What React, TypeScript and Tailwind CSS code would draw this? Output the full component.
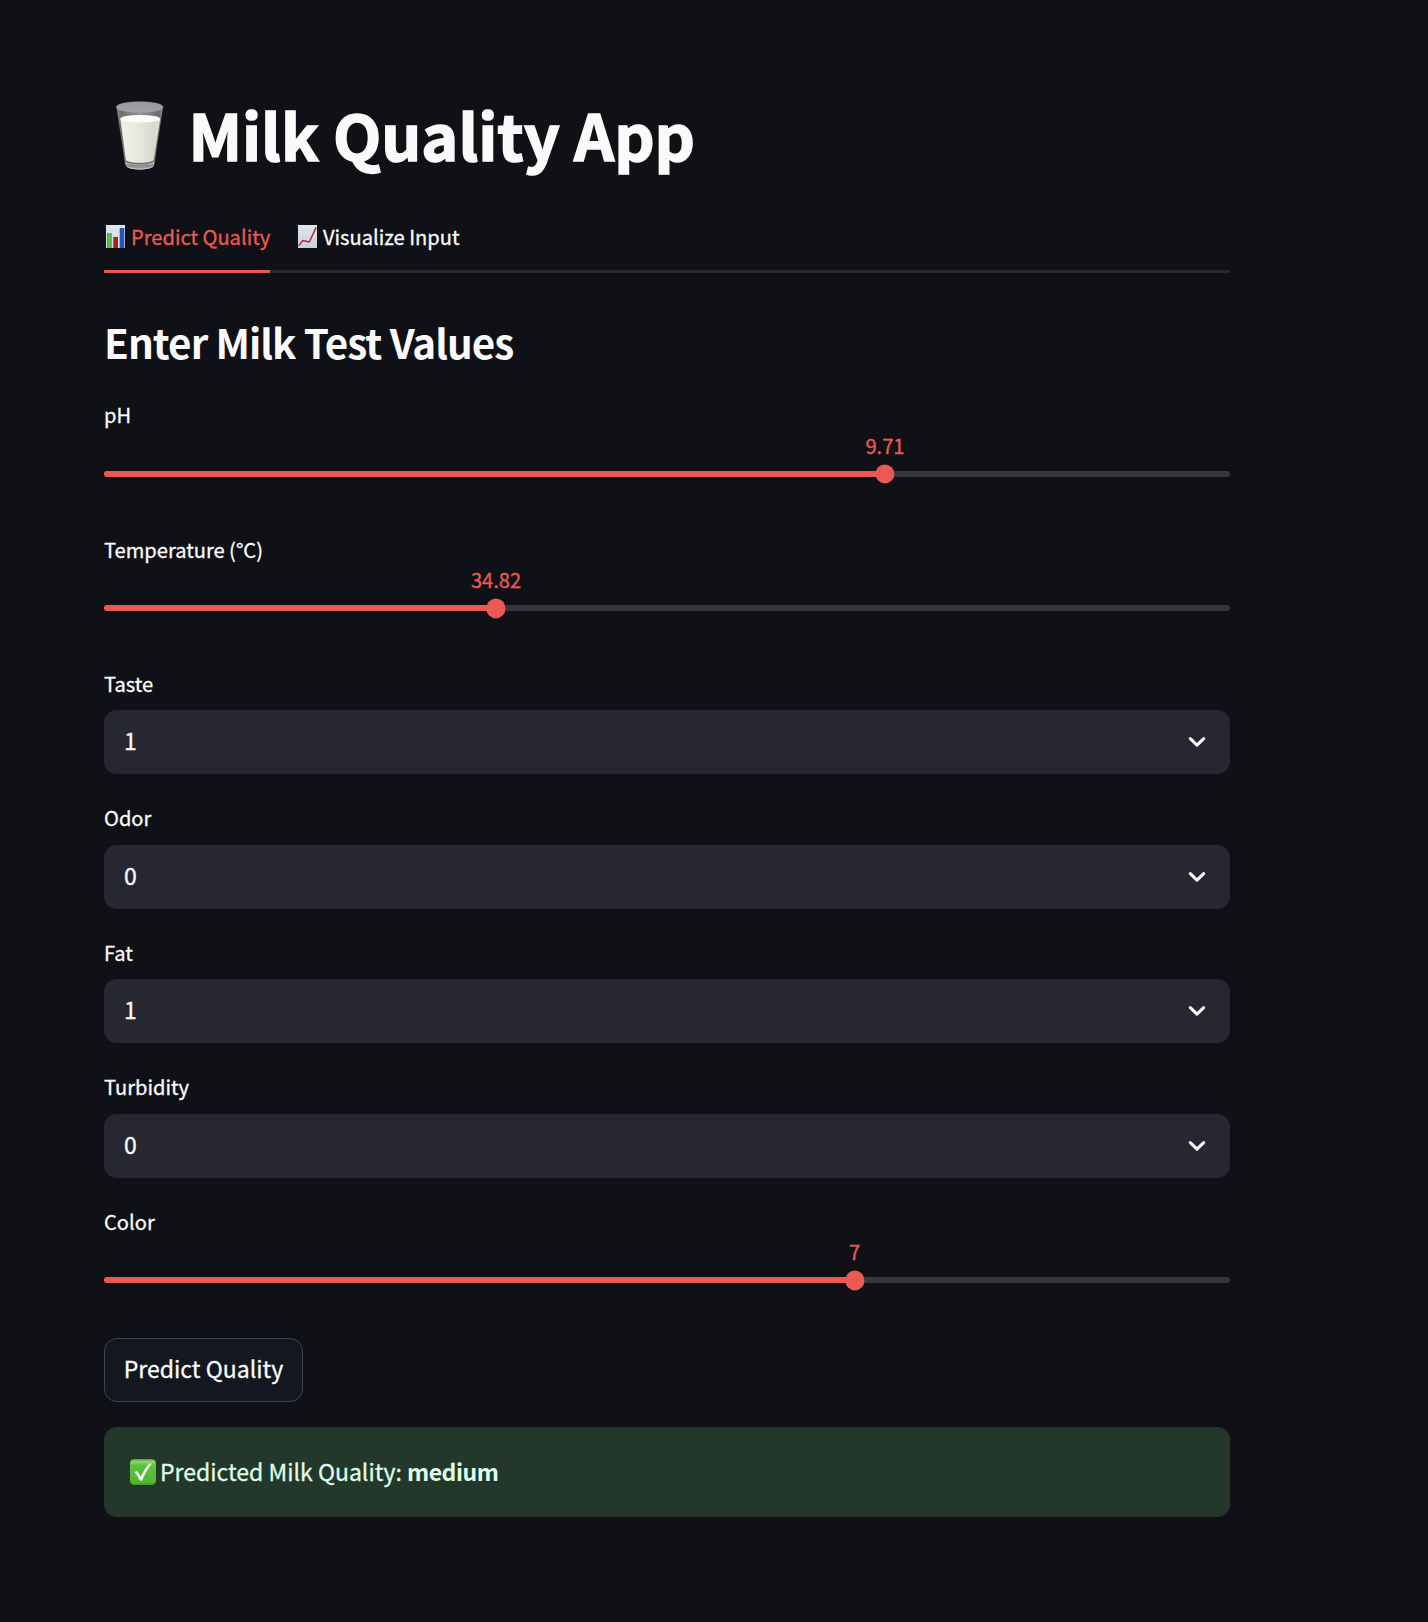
import React from "react";

function MilkGlass() {
  return (
    <svg viewBox="0 0 80 100" className="h-[100px] w-[80px]">
      <defs>
        <linearGradient id="glass" x1="0" x2="1" y1="0" y2="0">
          <stop offset="0" stopColor="#8e8f92" />
          <stop offset="0.1" stopColor="#6b6c6f" />
          <stop offset="0.5" stopColor="#949598" />
          <stop offset="0.9" stopColor="#6b6c6f" />
          <stop offset="1" stopColor="#8e8f92" />
        </linearGradient>
        <linearGradient id="milk" x1="0" x2="1" y1="0" y2="0">
          <stop offset="0" stopColor="#f1f0e8" />
          <stop offset="0.45" stopColor="#e9e8df" />
          <stop offset="0.85" stopColor="#d9d8cb" />
          <stop offset="1" stopColor="#e6e5dc" />
        </linearGradient>
        <linearGradient id="rim" x1="0" x2="0" y1="0" y2="1">
          <stop offset="0" stopColor="#98999b" />
          <stop offset="1" stopColor="#a0a1a3" />
        </linearGradient>
        <linearGradient id="base" x1="0" x2="0" y1="0" y2="1">
          <stop offset="0" stopColor="#d5d5d1" />
          <stop offset="0.5" stopColor="#8b8b8b" />
          <stop offset="1" stopColor="#a8a8a8" />
        </linearGradient>
      </defs>
      <path d="M16.5 17 L25 74 C27 81 52 81 54.5 74 L63 17 Z" fill="url(#glass)" />
      <ellipse cx="39.7" cy="17" rx="23.2" ry="5.2" fill="url(#rim)" stroke="#a6a7a9" strokeWidth="0.6" />
      <path d="M20.3 28.5 L25.8 70 C28 73.8 51 73.8 53.7 70 L60.2 28.5 Z" fill="url(#milk)" />
      <ellipse cx="40.2" cy="28.8" rx="19.9" ry="3.8" fill="#fbfbf7" />
      <path d="M25.3 71.5 C30 75.2 49 75.2 54.3 71.5 L53.8 76 C49 80.7 30 80.7 25.8 76 Z" fill="url(#base)" />
      <path d="M26 71.2 C31 74.3 48 74.3 53.5 71.2" stroke="#5a5a58" strokeWidth="0.8" fill="none" />
      <path d="M27 76.5 C31 79.8 48 79.8 53 76.5" stroke="#c6c6c6" strokeWidth="1" fill="none" />
    </svg>
  );
}

function BarChartIcon() {
  return (
    <svg viewBox="0 0 19 23" className="h-[23px] w-[19px]">
      <defs>
        <linearGradient id="paperA" x1="0" x2="0" y1="0" y2="1">
          <stop offset="0" stopColor="#dfe7f1" />
          <stop offset="1" stopColor="#d3dae2" />
        </linearGradient>
        <linearGradient id="green" x1="0" x2="1">
          <stop offset="0" stopColor="#3fa32c" />
          <stop offset="0.5" stopColor="#63c746" />
          <stop offset="1" stopColor="#3fa32c" />
        </linearGradient>
      </defs>
      <rect width="19" height="23" fill="url(#paperA)" />
      <path d="M0 5.5H19M0 11.5H19M0 17H19" stroke="#d0d9e3" strokeWidth="0.5" />
      <rect x="1" y="8" width="4.7" height="15" fill="url(#green)" />
      <rect x="7.3" y="12" width="4.7" height="11" fill="#a9221a" />
      <rect x="13.7" y="3" width="4.6" height="20" fill="#2754b8" />
    </svg>
  );
}

function TrendIcon() {
  return (
    <svg viewBox="0 0 19 23" className="h-[23px] w-[19px]">
      <defs>
        <linearGradient id="paperB" x1="0" x2="0" y1="0" y2="1">
          <stop offset="0" stopColor="#dfe6ef" />
          <stop offset="1" stopColor="#c9d1d8" />
        </linearGradient>
      </defs>
      <rect width="19" height="23" fill="url(#paperB)" />
      <path d="M0 5.5H19M0 11.5H19M0 17H19" stroke="#c8d1da" strokeWidth="0.4" />
      <path d="M0.8 20.6 L4.8 15.5 L11.3 17 L18.2 2.4" stroke="#b5302b" strokeWidth="1.5" fill="none" strokeLinejoin="round" />
    </svg>
  );
}

function CheckBadge() {
  return (
    <svg viewBox="0 0 26 26" className="h-[26px] w-[26px]">
      <defs>
        <linearGradient id="badge" x1="0" x2="0" y1="0" y2="1">
          <stop offset="0" stopColor="#4aa52f" />
          <stop offset="0.1" stopColor="#8bd86d" />
          <stop offset="0.25" stopColor="#5cc23c" />
          <stop offset="0.9" stopColor="#52b733" />
          <stop offset="1" stopColor="#3f9826" />
        </linearGradient>
      </defs>
      <rect width="26" height="26" rx="4.5" fill="url(#badge)" />
      <path d="M4.6 13.2 C5.6 11.6 7.4 12 8.2 13.6 L10.6 17.8 C13 13 15.7 8.6 18.8 4.9 C19.4 4.4 21.6 4.4 21.5 5 C17.6 9.8 14.7 15.2 12.3 21 C11.9 21.9 10.1 21.9 9.6 21 C8 17.6 6.7 15.3 4.6 13.2 Z" fill="#fff" />
    </svg>
  );
}

function Label({ children }: { children: React.ReactNode }) {
  return <div className="h-[38.4px] pt-[0.4px] text-[20.1px] leading-[35.4px]">{children}</div>;
}

function Slider({ label, value, percent }: { label: string; value: string; percent: number }) {
  return (
    <div className="h-[108.8px]">
      <Label>{label}</Label>
      <div className="relative mt-[35.8px] h-[6px] rounded-full bg-[#36383e]">
        <div className="h-full rounded-full bg-[#ec5953]" style={{ width: `${percent}%` }} />
        <div
          className="absolute top-1/2 size-[19.2px] -translate-x-1/2 -translate-y-1/2 rounded-full bg-[#ec5953]"
          style={{ left: `${percent}%` }}
        />
        <div
          className="absolute bottom-[15px] -translate-x-1/2 text-[20.15px] leading-[32px] text-[#ec5953]"
          style={{ left: `${percent}%` }}
        >
          {value}
        </div>
      </div>
    </div>
  );
}

function Select({ label, value }: { label: string; value: string }) {
  return (
    <div className="h-[108.8px]">
      <Label>{label}</Label>
      <div className="mt-[6.4px] flex h-[64px] items-center justify-between rounded-[12.8px] bg-[#262730] pr-[24px] pl-[20px]">
        <span className="pb-[4px] text-[23px] leading-[36px]">{value}</span>
        <svg viewBox="0 0 18 12" className="h-[12px] w-[18px]">
          <path d="M2.3 2.7 L9 9.2 L15.7 2.7" fill="none" stroke="#fafafa" strokeWidth="3.1" strokeLinecap="round" strokeLinejoin="round" />
        </svg>
      </div>
    </div>
  );
}

export default function App() {
  return (
    <div className="min-h-[1622px] bg-[#0f1116] font-['Noto_Sans_CJK_SC',sans-serif] text-[#fafafa] [-webkit-text-stroke-width:0.3px]">
      <main className="ml-[104px] w-[1126px] pt-[90px]">
        <h1 className="flex h-[100px] items-start">
          <span className="-ml-[4px] w-[88px]">
            <MilkGlass />
          </span>
          <span className="pl-[0.5px] whitespace-nowrap text-[62.8px] leading-[87.6px] font-bold tracking-[-0.02px] [-webkit-text-stroke-width:1.5px]">
            Milk Quality App
          </span>
        </h1>

        <div className="mt-[21px] flex h-[62px] gap-[26px] border-b-[3px] border-[#262730] text-[20.1px] leading-[51px]">
          <div className="-mb-[3px] flex h-[62px] w-[166px] border-b-[3px] border-[#ec5953] pl-[2px] whitespace-nowrap text-[#ec5953]">
            <span className="mt-[14px] mr-[6px]">
              <BarChartIcon />
            </span>
            Predict Quality
          </div>
          <div className="flex pl-[2px] whitespace-nowrap">
            <span className="mt-[14px] mr-[6px]">
              <TrendIcon />
            </span>
            Visualize Input
          </div>
        </div>

        <h2 className="mt-[41px] mb-[22.8px] h-[60px] text-[40.4px] leading-[55px] font-bold tracking-[-0.95px] [-webkit-text-stroke-width:0px]">
          Enter Milk Test Values
        </h2>

        <div className="flex flex-col gap-[25.6px]">
          <Slider label="pH" value="9.71" percent={69.36} />
          <Slider label="Temperature (°C)" value="34.82" percent={34.82} />
          <Select label="Taste" value="1" />
          <Select label="Odor" value="0" />
          <Select label="Fat" value="1" />
          <Select label="Turbidity" value="0" />
          <Slider label="Color" value="7" percent={66.67} />
          <button className="h-[64px] w-[199px] rounded-[12.8px] border border-[#41444c] bg-[#131720] pb-[2px] text-center text-[23px] whitespace-nowrap">
            Predict Quality
          </button>
          <div className="flex h-[89.6px] items-center rounded-[12.8px] bg-[#23372b] pl-[26px] text-[23px] text-[#dffde9]">
            <CheckBadge />
            <span className="ml-[4px] pb-[2px]">
              Predicted Milk Quality:{" "}
              <strong className="font-bold tracking-[-0.45px] [-webkit-text-stroke-width:0px]">medium</strong>
            </span>
          </div>
        </div>
      </main>
    </div>
  );
}
